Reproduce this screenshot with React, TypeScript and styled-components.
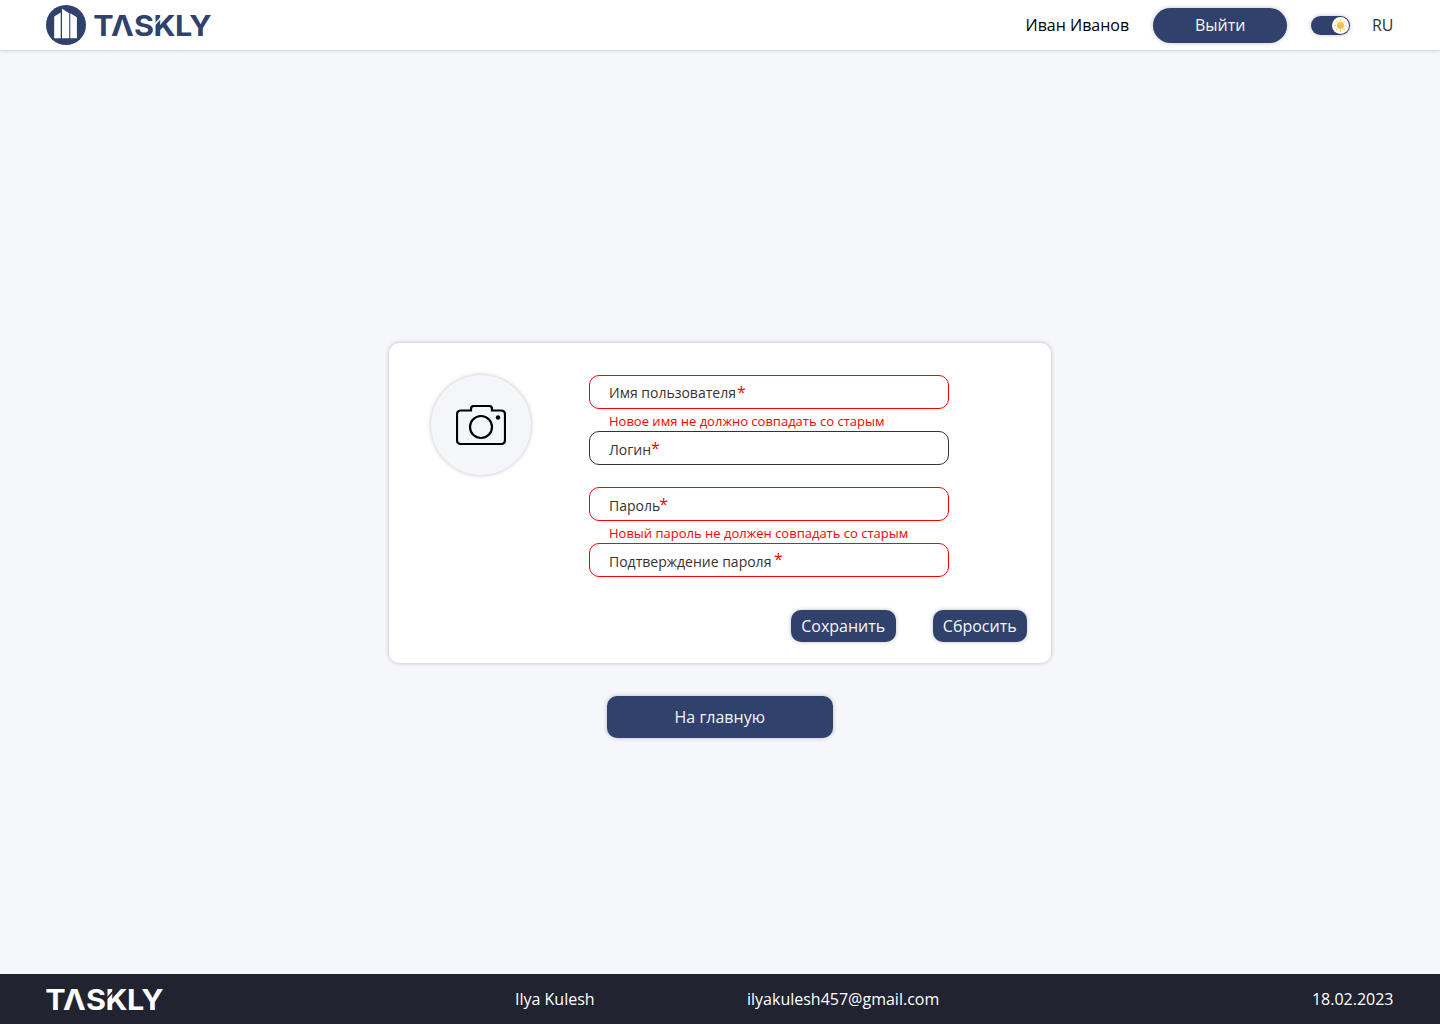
import React from "react";
import styled, { createGlobalStyle } from "styled-components";

const navy = "#30416b";
const ink = "#333333";
const paper = "#f5f6fa";
const shadow = "0 0 4px rgba(0, 0, 0, 0.25)";

const GlobalStyle = createGlobalStyle`
  *, *::before, *::after { box-sizing: border-box; }
  body { margin: 0; font-family: "Open Sans", "Noto Sans", sans-serif; font-size: 16px; }
  button { font: inherit; }
`;

const Page = styled.div`
  height: 1024px;
  display: flex;
  flex-direction: column;
  background: #f5f7fb;
`;

const Header = styled.header`
  height: 50px;
  flex: none;
  display: flex;
  align-items: center;
  padding: 0 46.5px 0 46px;
  background: #fff;
  box-shadow: 0 0 4px rgba(0, 0, 0, 0.25);
`;

const Brand = styled.div`
  display: flex;
  align-items: center;
  gap: 8px;
  margin-right: auto;
`;

const UserName = styled.span`
  color: #000;
  line-height: 22px;
  margin-right: 24.3px;
`;

const Button = styled.button<{ $w: number; $h: number; $r?: number }>`
  width: ${(p) => p.$w}px;
  height: ${(p) => p.$h}px;
  border: 0;
  padding: 0 0.5px 0 0;
  border-radius: ${(p) => p.$r ?? 10}px;
  background: ${navy};
  color: ${paper};
  line-height: 22px;
  white-space: nowrap;
  box-shadow: ${shadow};
`;

const Toggle = styled.div`
  width: 39px;
  height: 19px;
  margin: 1px 21.5px 0 24px;
  padding: 1px;
  display: flex;
  justify-content: flex-end;
  border-radius: 10px;
  background: ${navy};
  box-shadow: ${shadow};
`;

const Knob = styled.div`
  width: 17px;
  height: 17px;
  border-radius: 50%;
  background: #fff;
`;

const Language = styled.span`
  color: ${ink};
  line-height: 22px;
`;

const Main = styled.main`
  flex: 1;
  display: flex;
  flex-direction: column;
  align-items: center;
  padding-top: 293px;
  gap: 33px;
`;

const Card = styled.section`
  width: 662px;
  height: 320px;
  display: flex;
  align-items: flex-start;
  padding: 32px 24px 21px 42px;
  border-radius: 10px;
  background: #fff;
  box-shadow: ${shadow};
`;

const Avatar = styled.div`
  width: 100px;
  height: 100px;
  flex: none;
  display: flex;
  align-items: center;
  justify-content: center;
  border-radius: 50%;
  background: ${paper};
  box-shadow: ${shadow};
`;

const Form = styled.form`
  flex: 1;
  height: 267px;
  margin-left: 58px;
  display: flex;
  flex-direction: column;
`;

const Field = styled.label<{ $error?: boolean; $top?: number }>`
  width: 360px;
  height: 34px;
  display: flex;
  align-items: flex-start;
  padding: ${(p) => p.$top ?? 8}px 19px 0;
  border: 1px solid ${(p) => (p.$error ? "#ff0000" : ink)};
  border-radius: 10px;
  color: ${ink};
  font-size: 14px;
  line-height: 20px;
`;

const Star = styled.span<{ $gap?: number; $lift?: number }>`
  margin: -${(p) => p.$lift ?? 3}px 0 0 ${(p) => p.$gap ?? 0}px;
  color: #ff0000;
  font-size: 16px;
  line-height: 22px;
`;

const Message = styled.div`
  height: 22px;
  padding-left: 20px;
  padding-top: 3px;
  color: #ff0000;
  font-size: 13px;
  line-height: 18px;
`;

const Actions = styled.div`
  display: flex;
  justify-content: flex-end;
  gap: 37px;
  margin-top: auto;
`;

const Footer = styled.footer`
  height: 50px;
  flex: none;
  display: grid;
  grid-template-columns: 469px 232px 1fr auto;
  align-items: center;
  padding: 0 46.5px 0 46px;
  background: #212430;
  color: #fff;
  line-height: 22px;
`;

const LogoText = styled.text`
  font-family: Inter, "Open Sans", sans-serif;
  font-size: 28px;
  font-weight: 750;
`;

function Wordmark({ color, cut }: { color: string; cut: string }) {
  return (
    <svg width="124" height="40" viewBox="0 0 124 40" role="img" aria-label="TASKLY">
      <LogoText fill={color} y="31" x="-0.8 15.5 36.6 54.6 74.2 87.3" transform="scale(1.09 1)">TΛSKLY</LogoText>
      <path d="M59 21.5 L68 11.5" stroke={cut} strokeWidth="1.8" />
    </svg>
  );
}

function BuildingMark() {
  return (
    <svg width="40" height="40" viewBox="0 0 40 40">
      <circle cx="20" cy="20" r="20" fill={navy} />
      <path d="M8.2 11.5 14.7 7.5V33.3H8.2ZM16 3.8 23.2 8.3V33.3H16ZM24.3 8.3 30.9 12.3V33.3H24.3Z" fill="#fff" />
    </svg>
  );
}

function Sun() {
  return (
    <svg width="17" height="17" viewBox="0 0 17 17">
      <circle cx="8.5" cy="8.5" r="3.5" fill="#f4c33d" />
      {[0, 45, 90, 135, 180, 225, 270, 315].map((a) => (
        <path key={a} d="M8.5 3.8V2.6" transform={`rotate(${a} 8.5 8.5)`} stroke="#f4c33d" strokeWidth="1" strokeLinecap="round" />
      ))}
    </svg>
  );
}

function Camera() {
  return (
    <svg width="50" height="40" viewBox="0 0 50 40" fill="none" stroke="#000" strokeWidth="2.2">
      <path d="M14 5.5H5Q1 5.5 1 9.5V35Q1 39 5 39H45Q49 39 49 35V9.5Q49 5.5 45 5.5H36V4Q36 1 33 1H18Q15 1 15 4V5.5H14" />
      <circle cx="25" cy="22" r="11" />
      <circle cx="42" cy="12.5" r="2.2" fill="#000" stroke="none" />
    </svg>
  );
}

export default function App() {
  return (
    <Page>
      <GlobalStyle />
      <Header>
        <Brand>
          <BuildingMark />
          <Wordmark color={navy} cut="#fff" />
        </Brand>
        <UserName>Иван Иванов</UserName>
        <Button $w={134} $h={35} $r={18}>Выйти</Button>
        <Toggle>
          <Knob><Sun /></Knob>
        </Toggle>
        <Language>RU</Language>
      </Header>
      <Main>
        <Card>
          <Avatar><Camera /></Avatar>
          <Form>
            <Field $error $top={7}>Имя пользователя<Star $gap={1} $lift={2}>*</Star></Field>
            <Message>Новое имя не должно совпадать со старым</Message>
            <Field>Логин<Star>*</Star></Field>
            <Message />
            <Field $error>Пароль<Star $gap={-1}>*</Star></Field>
            <Message>Новый пароль не должен совпадать со старым</Message>
            <Field $error>Подтверждение пароля<Star $gap={2.5} $lift={4}>*</Star></Field>
            <Actions>
              <Button type="button" $w={105} $h={32}>Сохранить</Button>
              <Button type="button" $w={94} $h={32}>Сбросить</Button>
            </Actions>
          </Form>
        </Card>
        <Button $w={226} $h={42}>На главную</Button>
      </Main>
      <Footer>
        <Wordmark color="#fff" cut="#212430" />
        <span>Ilya Kulesh</span>
        <span>ilyakulesh457@gmail.com</span>
        <span>18.02.2023</span>
      </Footer>
    </Page>
  );
}
